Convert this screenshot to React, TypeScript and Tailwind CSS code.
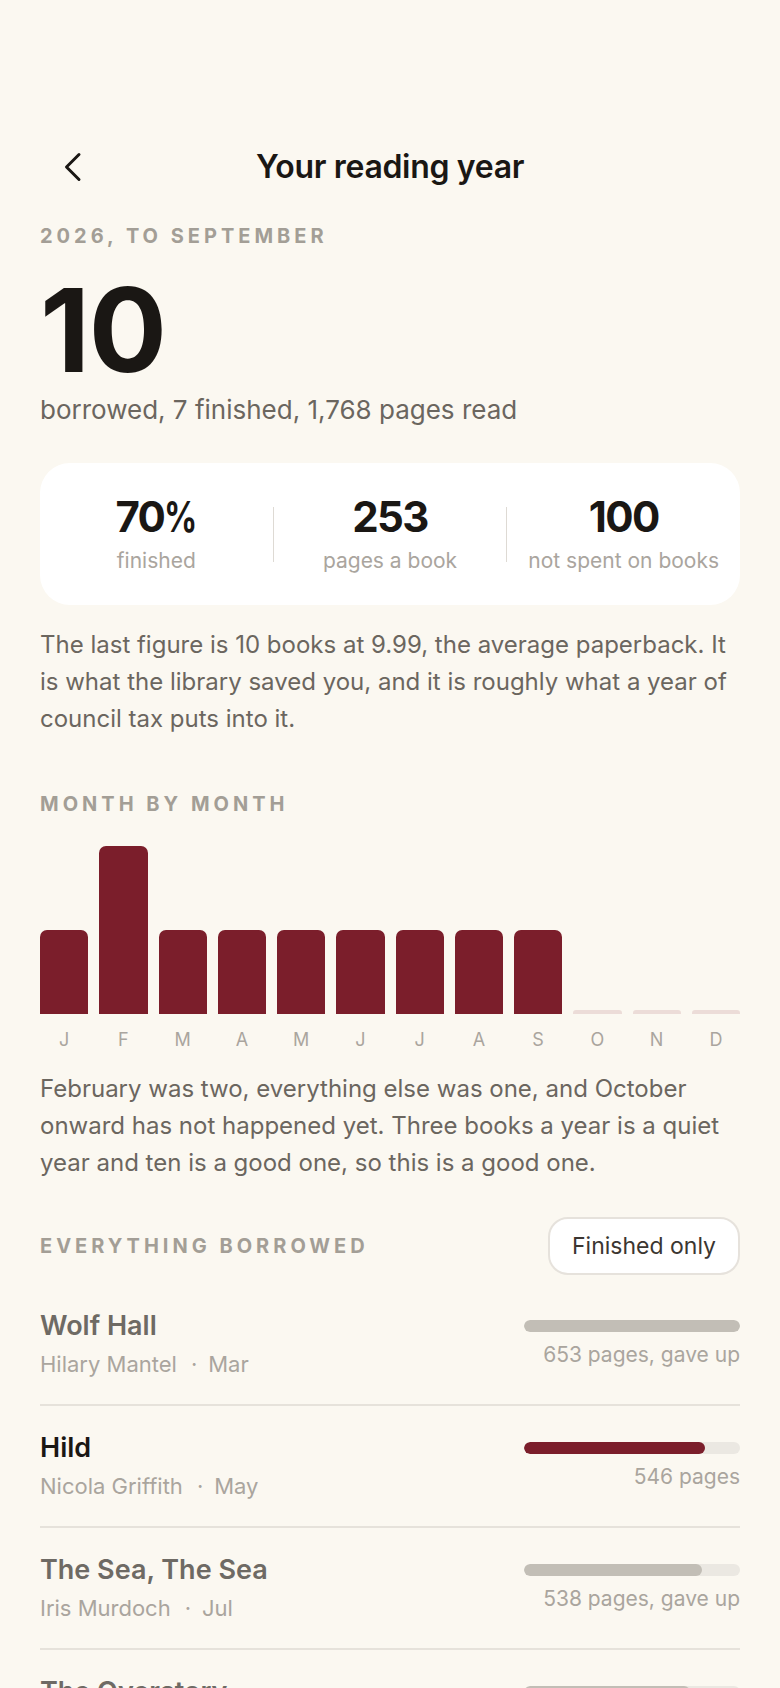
import React from "react";

const months = [
  { m: "J", v: 1 },
  { m: "F", v: 2 },
  { m: "M", v: 1 },
  { m: "A", v: 1 },
  { m: "M", v: 1 },
  { m: "J", v: 1 },
  { m: "J", v: 1 },
  { m: "A", v: 1 },
  { m: "S", v: 1 },
  { m: "O", v: 0 },
  { m: "N", v: 0 },
  { m: "D", v: 0 },
];

const books = [
  { title: "Wolf Hall", author: "Hilary Mantel", month: "Mar", pages: 653, finished: false },
  { title: "Hild", author: "Nicola Griffith", month: "May", pages: 546, finished: true },
  { title: "The Sea, The Sea", author: "Iris Murdoch", month: "Jul", pages: 538, finished: false },
  { title: "The Overstory", author: "Richard Powers", month: "Aug", pages: 502, finished: false },
];

const maxPages = 653;

function Stat({ value, label, pct }: { value: string; label: string; pct?: boolean }) {
  return (
    <div className="flex-1 flex flex-col items-center">
      <div className="text-[42px] leading-[48px] font-bold tracking-[-0.04em] text-[#1a1714]">
        {value}
        {pct ? <span className="inline-block origin-left scale-x-[0.78] -mr-[8px]">%</span> : null}
      </div>
      <div className="mt-[6px] text-[21px] leading-[28px] text-[#aaa59e]">{label}</div>
    </div>
  );
}

export default function App() {
  return (
    <div
      className="min-h-[1688px] bg-[#fbf8f1] px-10 pt-[138px]"
      style={{ fontFamily: "Inter, 'Noto Sans', sans-serif" }}
    >
      <header className="grid grid-cols-[1fr_auto_1fr] items-center h-[57px]">
        <div className="flex items-center">
          <svg width="20" height="32" viewBox="0 0 20 32" className="ml-[22px]" fill="none">
            <path
              d="M17 3.5 L4.5 16 L17 28.5"
              stroke="#1a1714"
              strokeWidth="3"
              strokeLinecap="round"
              strokeLinejoin="round"
            />
          </svg>
        </div>
        <h1 className="text-[32px] leading-[40px] font-semibold text-[#1a1714] tracking-[-0.01em]">
          Your reading year
        </h1>
        <div />
      </header>

      <div className="mt-[29px] text-[20px] leading-[24px] font-bold tracking-[0.2em] text-[#a39e96] uppercase">
        2026, to September
      </div>

      <div className="mt-[25px] text-[116px] leading-[115px] font-bold tracking-[-0.01em] text-[#1a1714]">
        10
      </div>
      <div className="mt-[6px] text-[26px] leading-[32px] text-[#6b665f]">
        borrowed, 7 finished, 1,768 pages read
      </div>

      <div className="mt-[37px] bg-white rounded-[30px] py-[30px] flex items-center">
        <Stat value="70" pct label="finished" />
        <div className="w-px h-[55px] bg-[#dedad4]" />
        <Stat value="253" label="pages a book" />
        <div className="w-px h-[55px] bg-[#dedad4]" />
        <Stat value="100" label="not spent on books" />
      </div>

      <p className="mt-[21px] text-[24px] leading-[37px] text-[#6b665f]">
        The last figure is 10 books at 9.99, the average paperback. It is what the library saved you, and it is
        roughly what a year of council tax puts into it.
      </p>

      <div className="mt-[55px] text-[20px] leading-[24px] font-bold tracking-[0.2em] text-[#a39e96] uppercase">
        Month by month
      </div>

      <div className="mt-[30px] grid grid-cols-12 gap-x-[11px]">
        {months.map((x, i) => (
          <div key={i} className="flex flex-col items-stretch">
            <div className="h-[168px] flex items-end">
              {x.v > 0 ? (
                <div
                  className="w-full bg-[#7b1e2b] rounded-t-[7px]"
                  style={{ height: `${x.v * 84}px` }}
                />
              ) : (
                <div className="w-full h-[4px] bg-[#ecdcd8] rounded-t-[3px]" />
              )}
            </div>
            <div className="mt-[14px] text-center text-[18px] leading-[24px] text-[#aaa59e]">{x.m}</div>
          </div>
        ))}
      </div>

      <p className="mt-[18px] text-[24px] leading-[37px] text-[#6b665f]">
        February was two, everything else was one, and October onward has not happened yet. Three books a year is
        a quiet year and ten is a good one, so this is a good one.
      </p>

      <div className="mt-[36px] flex items-center justify-between">
        <div className="text-[20px] leading-[24px] font-bold tracking-[0.2em] text-[#a39e96] uppercase">
          Everything borrowed
        </div>
        <button className="h-[58px] px-[22px] rounded-[20px] border-2 border-[#e6e2dc] bg-white text-[23px] text-[#3b3631]">
          Finished only
        </button>
      </div>

      <ul className="mt-[9px]">
        {books.map((b) => (
          <li
            key={b.title}
            className="h-[122px] border-b-2 border-[#e6e2db] flex items-center justify-between"
          >
            <div className="flex flex-col">
              <div
                className={`text-[27px] leading-[32px] font-semibold ${
                  b.finished ? "text-[#1a1714]" : "text-[#6e6a64]"
                }`}
              >
                {b.title}
              </div>
              <div className="mt-[8px] text-[22px] leading-[28px] text-[#aaa59e]">
                {b.author}
                <span className="ml-[14px] mr-[11px]">·</span>
                {b.month}
              </div>
            </div>
            <div className="w-[216px] flex flex-col items-end">
              <div className="w-full h-[12px] rounded-full bg-[#ebe8e2] overflow-hidden">
                <div
                  className={`h-full rounded-full ${b.finished ? "bg-[#7b1e2b]" : "bg-[#c2beb6]"}`}
                  style={{ width: `${(b.pages / maxPages) * 100}%` }}
                />
              </div>
              <div className="mt-[10px] text-[21px] leading-[26px] text-[#aaa59e]">
                {b.pages} pages{b.finished ? "" : ", gave up"}
              </div>
            </div>
          </li>
        ))}
      </ul>
    </div>
  );
}
